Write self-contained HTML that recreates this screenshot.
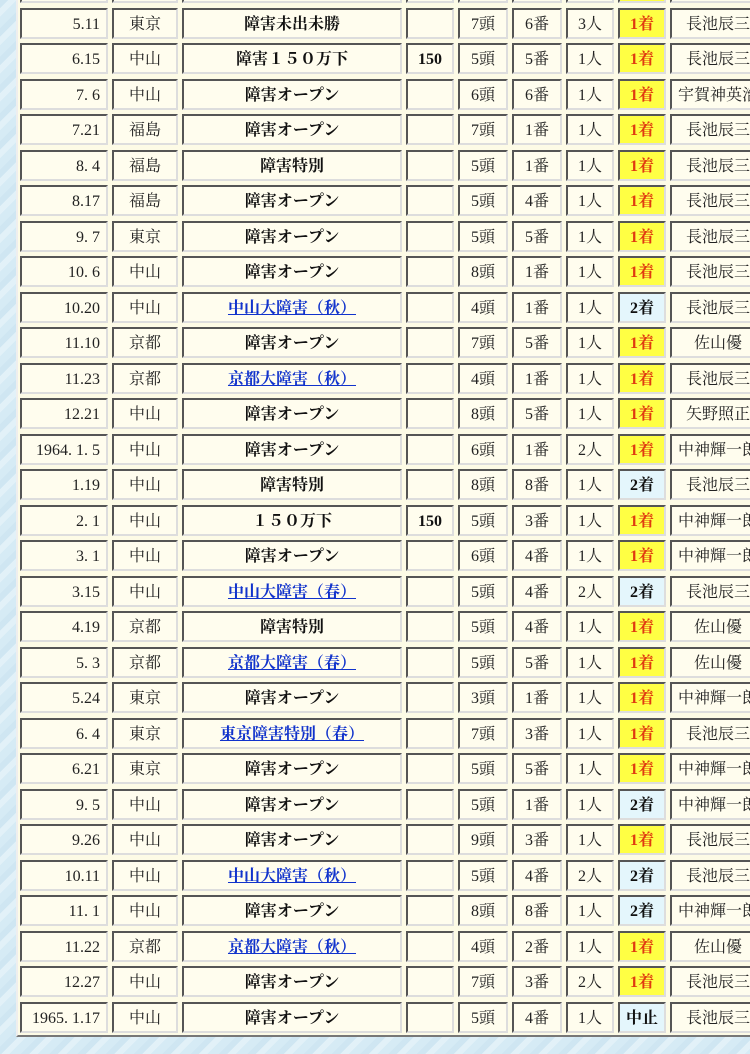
<!DOCTYPE html>
<html><head><meta charset="utf-8"><style>
body{margin:0;width:750px;height:1054px;overflow:hidden;position:relative;
background:repeating-linear-gradient(135deg,#cfe6f2 0 6px,#e2f1f8 6px 12px,#d6ebf5 12px 20px);
font-family:"Liberation Serif","Noto Serif CJK SC",serif;}
.t{position:absolute;left:16px;top:-32px;background:#fdfbe6;border:2px solid;border-color:#eee #777 #777 #eee;padding:2px;
display:grid;grid-template-columns:88px 66px 220px 48px 50px 50px 48px 48px 96px;column-gap:4px;row-gap:4.5px;grid-auto-rows:31px;width:750px;}
.t>div{box-sizing:border-box;border:2px solid;border-color:#555 #ddd #ddd #555;background:#fffdee;display:block;text-align:center;line-height:30px;height:31px;font-size:16px;color:#222;white-space:nowrap;overflow:hidden}
.t>div.d{text-align:right;padding-right:6px}
.t>div.b{font-weight:bold;color:#111}
.t>div.y{background:#ffff44;color:#e03a10;font-weight:bold}
.t>div.s{background:#e4f6fc;color:#111;font-weight:bold}
a{color:#1133cc;font-weight:bold;text-decoration:underline}
</style></head><body><div class="t">
<div class="d"></div><div></div><div class="b"></div><div></div><div></div><div></div><div></div><div class="y"></div><div></div>
<div class="d">5.11</div><div>東京</div><div class="b">障害未出未勝</div><div></div><div>7頭</div><div>6番</div><div>3人</div><div class="y">1着</div><div>長池辰三</div>
<div class="d">6.15</div><div>中山</div><div class="b">障害１５０万下</div><div class="b">150</div><div>5頭</div><div>5番</div><div>1人</div><div class="y">1着</div><div>長池辰三</div>
<div class="d">7. 6</div><div>中山</div><div class="b">障害オープン</div><div></div><div>6頭</div><div>6番</div><div>1人</div><div class="y">1着</div><div>宇賀神英治</div>
<div class="d">7.21</div><div>福島</div><div class="b">障害オープン</div><div></div><div>7頭</div><div>1番</div><div>1人</div><div class="y">1着</div><div>長池辰三</div>
<div class="d">8. 4</div><div>福島</div><div class="b">障害特別</div><div></div><div>5頭</div><div>1番</div><div>1人</div><div class="y">1着</div><div>長池辰三</div>
<div class="d">8.17</div><div>福島</div><div class="b">障害オープン</div><div></div><div>5頭</div><div>4番</div><div>1人</div><div class="y">1着</div><div>長池辰三</div>
<div class="d">9. 7</div><div>東京</div><div class="b">障害オープン</div><div></div><div>5頭</div><div>5番</div><div>1人</div><div class="y">1着</div><div>長池辰三</div>
<div class="d">10. 6</div><div>中山</div><div class="b">障害オープン</div><div></div><div>8頭</div><div>1番</div><div>1人</div><div class="y">1着</div><div>長池辰三</div>
<div class="d">10.20</div><div>中山</div><div><a>中山大障害（秋）</a></div><div></div><div>4頭</div><div>1番</div><div>1人</div><div class="s">2着</div><div>長池辰三</div>
<div class="d">11.10</div><div>京都</div><div class="b">障害オープン</div><div></div><div>7頭</div><div>5番</div><div>1人</div><div class="y">1着</div><div>佐山優</div>
<div class="d">11.23</div><div>京都</div><div><a>京都大障害（秋）</a></div><div></div><div>4頭</div><div>1番</div><div>1人</div><div class="y">1着</div><div>長池辰三</div>
<div class="d">12.21</div><div>中山</div><div class="b">障害オープン</div><div></div><div>8頭</div><div>5番</div><div>1人</div><div class="y">1着</div><div>矢野照正</div>
<div class="d">1964. 1. 5</div><div>中山</div><div class="b">障害オープン</div><div></div><div>6頭</div><div>1番</div><div>2人</div><div class="y">1着</div><div>中神輝一郎</div>
<div class="d">1.19</div><div>中山</div><div class="b">障害特別</div><div></div><div>8頭</div><div>8番</div><div>1人</div><div class="s">2着</div><div>長池辰三</div>
<div class="d">2. 1</div><div>中山</div><div class="b">１５０万下</div><div class="b">150</div><div>5頭</div><div>3番</div><div>1人</div><div class="y">1着</div><div>中神輝一郎</div>
<div class="d">3. 1</div><div>中山</div><div class="b">障害オープン</div><div></div><div>6頭</div><div>4番</div><div>1人</div><div class="y">1着</div><div>中神輝一郎</div>
<div class="d">3.15</div><div>中山</div><div><a>中山大障害（春）</a></div><div></div><div>5頭</div><div>4番</div><div>2人</div><div class="s">2着</div><div>長池辰三</div>
<div class="d">4.19</div><div>京都</div><div class="b">障害特別</div><div></div><div>5頭</div><div>4番</div><div>1人</div><div class="y">1着</div><div>佐山優</div>
<div class="d">5. 3</div><div>京都</div><div><a>京都大障害（春）</a></div><div></div><div>5頭</div><div>5番</div><div>1人</div><div class="y">1着</div><div>佐山優</div>
<div class="d">5.24</div><div>東京</div><div class="b">障害オープン</div><div></div><div>3頭</div><div>1番</div><div>1人</div><div class="y">1着</div><div>中神輝一郎</div>
<div class="d">6. 4</div><div>東京</div><div><a>東京障害特別（春）</a></div><div></div><div>7頭</div><div>3番</div><div>1人</div><div class="y">1着</div><div>長池辰三</div>
<div class="d">6.21</div><div>東京</div><div class="b">障害オープン</div><div></div><div>5頭</div><div>5番</div><div>1人</div><div class="y">1着</div><div>中神輝一郎</div>
<div class="d">9. 5</div><div>中山</div><div class="b">障害オープン</div><div></div><div>5頭</div><div>1番</div><div>1人</div><div class="s">2着</div><div>中神輝一郎</div>
<div class="d">9.26</div><div>中山</div><div class="b">障害オープン</div><div></div><div>9頭</div><div>3番</div><div>1人</div><div class="y">1着</div><div>長池辰三</div>
<div class="d">10.11</div><div>中山</div><div><a>中山大障害（秋）</a></div><div></div><div>5頭</div><div>4番</div><div>2人</div><div class="s">2着</div><div>長池辰三</div>
<div class="d">11. 1</div><div>中山</div><div class="b">障害オープン</div><div></div><div>8頭</div><div>8番</div><div>1人</div><div class="s">2着</div><div>中神輝一郎</div>
<div class="d">11.22</div><div>京都</div><div><a>京都大障害（秋）</a></div><div></div><div>4頭</div><div>2番</div><div>1人</div><div class="y">1着</div><div>佐山優</div>
<div class="d">12.27</div><div>中山</div><div class="b">障害オープン</div><div></div><div>7頭</div><div>3番</div><div>2人</div><div class="y">1着</div><div>長池辰三</div>
<div class="d">1965. 1.17</div><div>中山</div><div class="b">障害オープン</div><div></div><div>5頭</div><div>4番</div><div>1人</div><div class="s">中止</div><div>長池辰三</div>
</div></body></html>
